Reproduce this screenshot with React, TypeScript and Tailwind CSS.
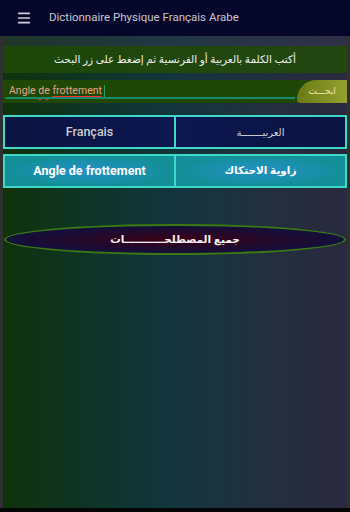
import { Menu } from 'lucide-react';

const font = { fontFamily: 'Roboto, "DejaVu Sans", sans-serif' };

export default function App() {
  return (
    <div className="w-[350px] h-[512px] flex flex-col bg-[#050505]" style={font}>
      <header className="h-[36px] shrink-0 bg-[#06062a] flex items-center">
        <Menu className="ml-[16px] w-[16px] h-[16px] text-[#d0d0d8]" strokeWidth={2.5} />
        <span className="ml-[17px] text-[11.5px] text-[#c6c6d0]">Dictionnaire Physique Français Arabe</span>
      </header>

      <div className="flex-1 mb-[4px] px-[3px] bg-[#303030] flex">
        <main className="flex-1 bg-gradient-to-r from-[#0e3208] via-[#12353f] to-[#2a293e] flex flex-col">
          <div className="h-[10px] bg-[#3a3c52]/40" />
          <div className="h-[27px] bg-gradient-to-r from-[#1c4709] to-[#244612] flex items-center justify-center">
            <span dir="rtl" className="text-[10.5px] text-[#f0f0f0]">أكتب  الكلمة بالعربية أو الفرنسية ثم إضغط على زر البحث</span>
          </div>

          <div className="mt-[7px] h-[23px] bg-[#1f4706] flex items-stretch">
            <div className="flex-1 relative flex items-center pl-[6px]">
              <span className="text-[10.5px] text-[#e8a48a] leading-none">
                Angle <span className="underline decoration-wavy decoration-[#ff3030] underline-offset-2">de</span>{' '}
                <span className="underline decoration-[#ff3030] underline-offset-2">frottement</span>
              </span>
              <span className="ml-[2px] w-px h-[13px] bg-[#28a070]" />
              <div className="absolute left-[2px] right-[2px] bottom-[4px] h-[2px] bg-[#168a6c]" />
            </div>
            <div className="w-[50px] rounded-tl-[22px] rounded-bl-[4px] bg-gradient-to-r from-[#6a7a14] to-[#96a030] flex items-center justify-center">
              <span dir="rtl" className="text-[9px] text-[#f0eab0]">ابحـــث</span>
            </div>
          </div>

          <div className="mt-[12px] h-[34px] flex">
            <button className="flex-1 border-2 border-[#3ed8c6] bg-gradient-to-r from-[#0a1440] to-[#0d1650] text-[#cccccc] text-[12.5px] font-medium">
              Français
            </button>
            <button className="flex-1 border-2 border-l-0 border-[#3ed8c6] bg-gradient-to-r from-[#0d1650] to-[#0a1440] text-[#d6d6d6] text-[10px]">
              <span dir="rtl">العربيـــــــة</span>
            </button>
          </div>

          <div className="mt-[5px] h-[34px] flex">
            <button className="flex-1 border-2 border-[#3ed8c6] bg-[radial-gradient(ellipse_at_center,#2490c8_0%,#138f98_70%)] text-white text-[12.5px] font-bold">
              Angle de frottement
            </button>
            <button className="flex-1 border-2 border-l-0 border-[#3ed8c6] bg-[radial-gradient(ellipse_at_center,#2490c8_0%,#138f98_70%)] text-white text-[10.5px] font-bold">
              <span dir="rtl">زاوية الاحتكاك</span>
            </button>
          </div>

          <div className="mt-[36px] mx-[1px] h-[31px] rounded-[50%] border-2 border-[#3c7a12] bg-[radial-gradient(ellipse_at_center,#3e0012_0%,#1f0a2e_45%,#0a1448_90%)] flex items-center justify-center">
            <span dir="rtl" className="text-[10.5px] font-bold text-[#f2f2f2]">جميع المصطلحـــــــــــات</span>
          </div>
        </main>
      </div>
    </div>
  );
}
